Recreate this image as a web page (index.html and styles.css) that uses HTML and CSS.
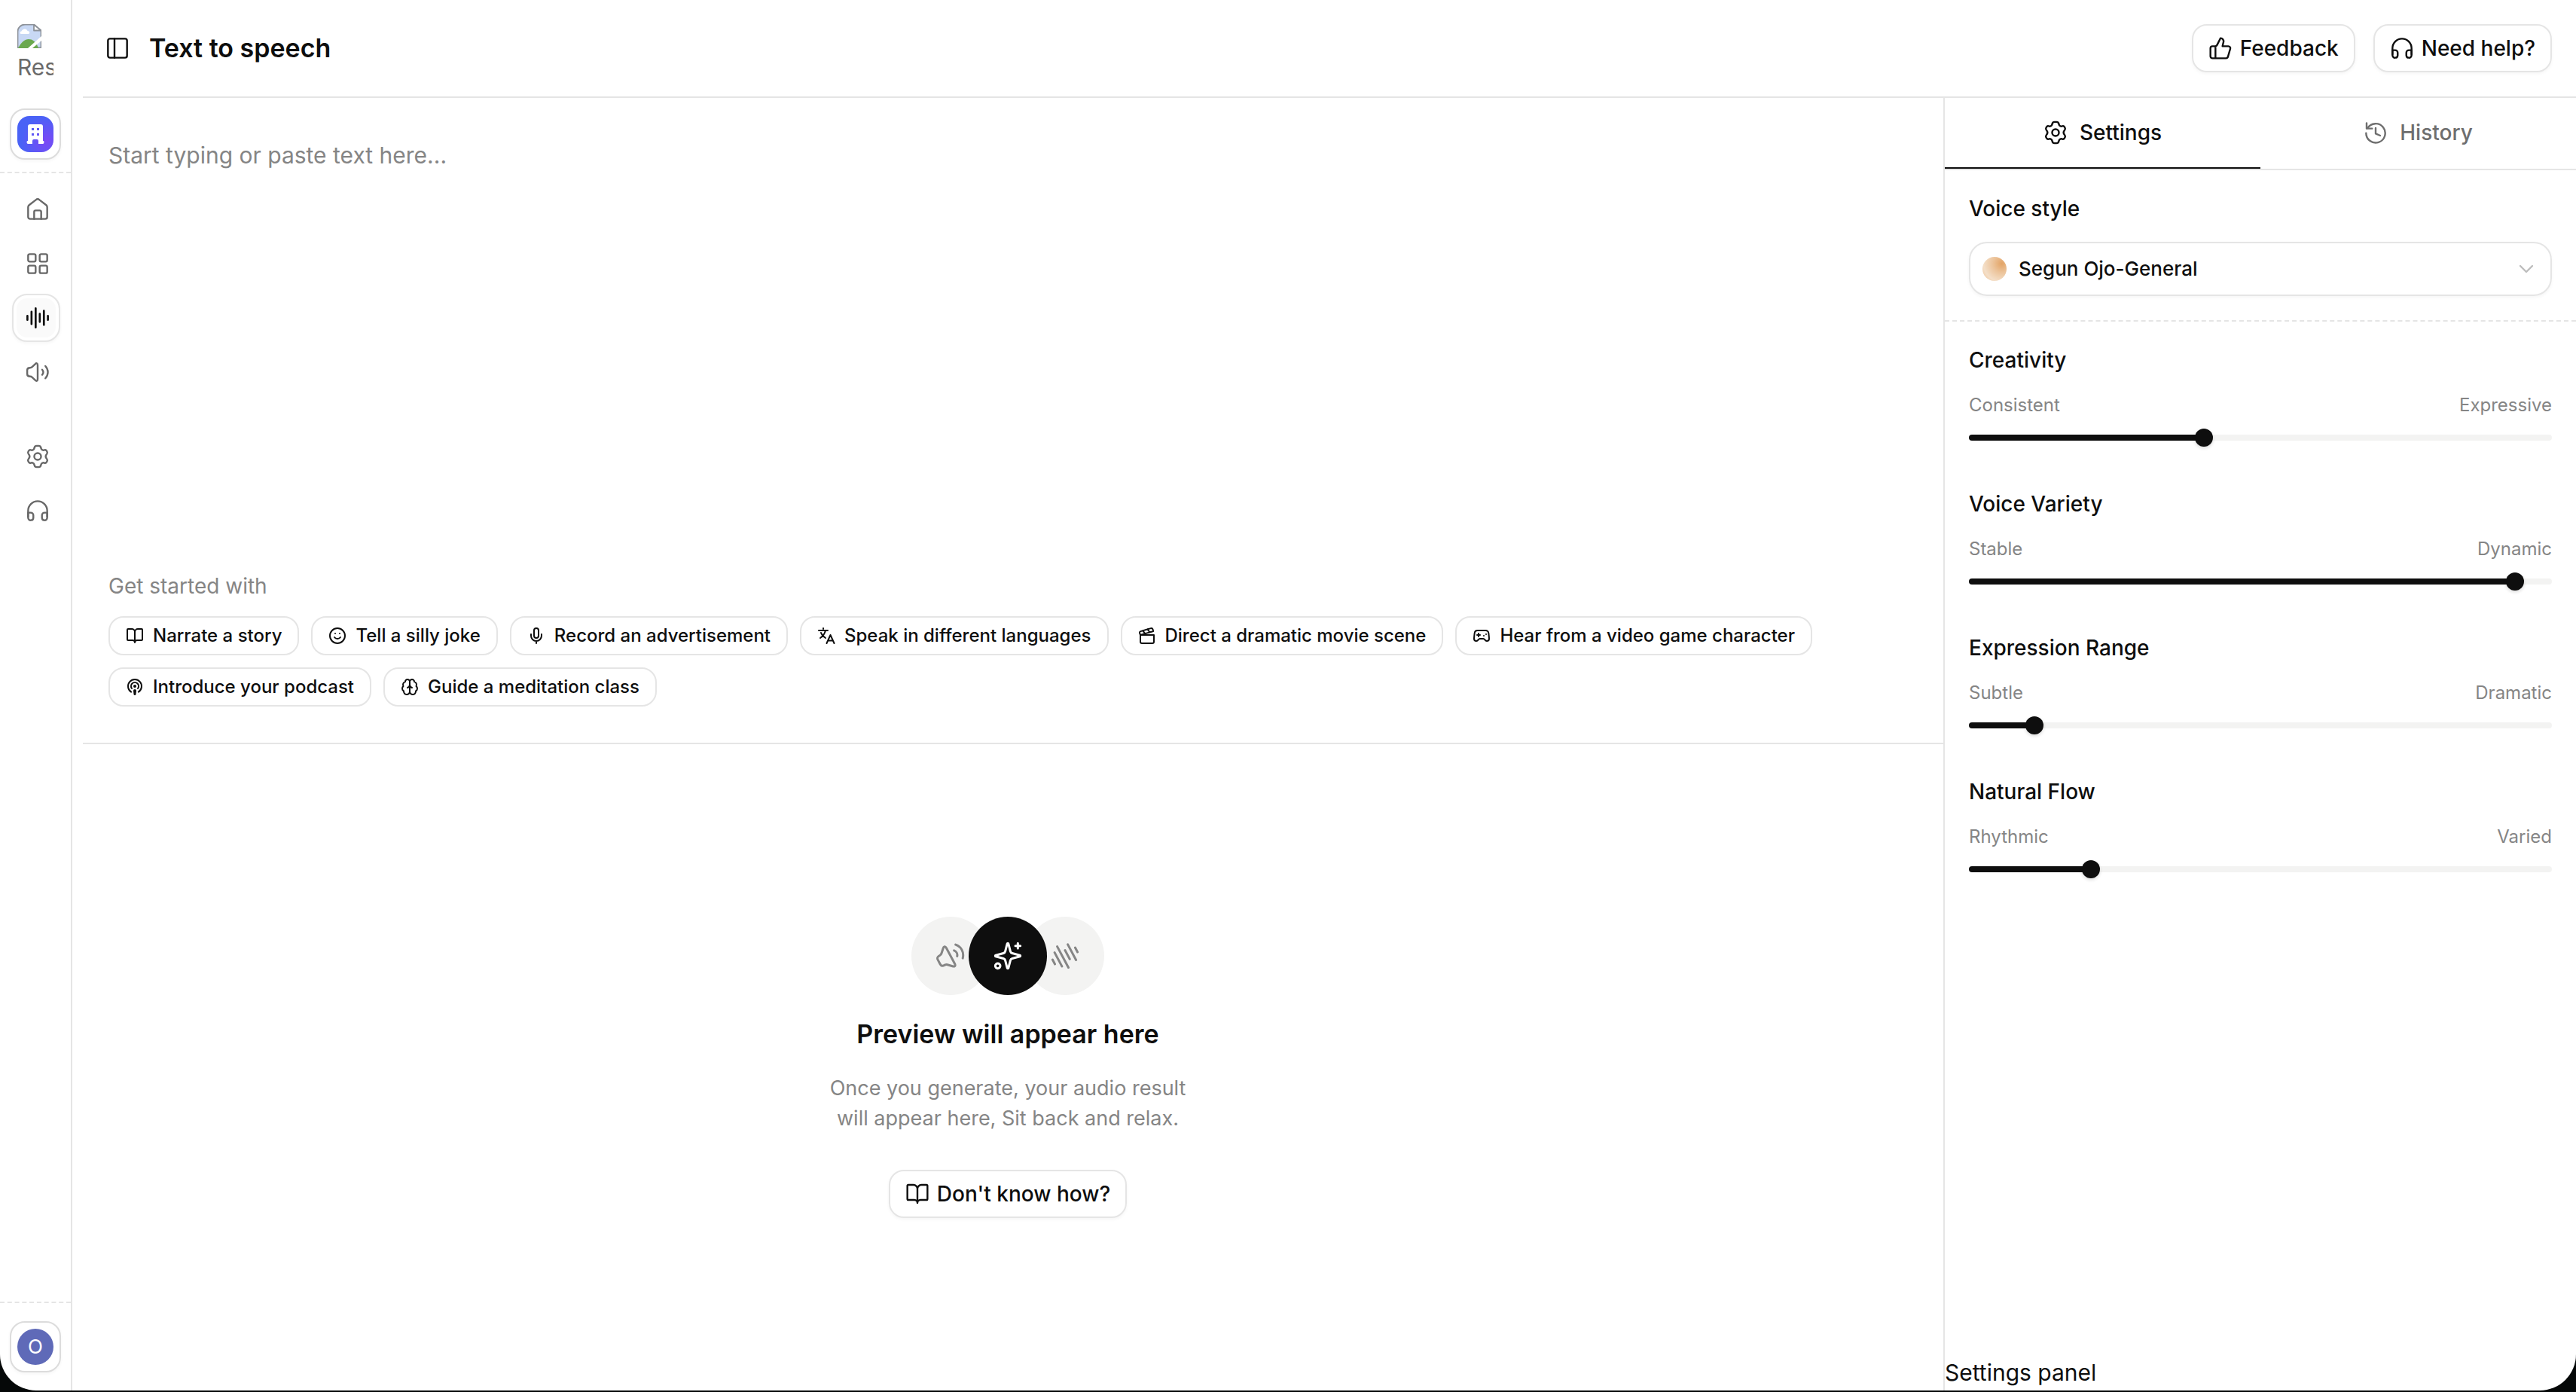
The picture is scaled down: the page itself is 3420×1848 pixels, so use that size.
FILE: index.html
```html
<!DOCTYPE html>
<html lang="en">
<head>
  <meta charset="UTF-8">
  <meta name="viewport" content="width=device-width, initial-scale=1.0">
  <title>Text to speech</title>
  <link rel="stylesheet" href="styles.css">
</head>
<body>
  <!-- shared icons -->
  <svg class="sprite" aria-hidden="true">
    <symbol id="i-home" viewBox="0 0 24 24"><path d="M2.5 9.8c0-.9.3-1.5 1-2.1l6.700-5.200c1.100-.9 2.500-.9 3.600 0l6.700 5.200c.7.6 1 1.200 1 2.100v9.700a2 2 0 0 1-2 2h-15a2 2 0 0 1-2-2z"/><path d="M8.500 21.500v-7a1.500 1.500 0 0 1 1.500-1.500h4a1.500 1.500 0 0 1 1.500 1.500v7"/></symbol>
    <symbol id="i-grid" viewBox="0 0 24 24"><rect x="2.500" y="2.500" width="7.500" height="7.500" rx="1.500"/><rect x="14" y="2.500" width="7.500" height="7.500" rx="1.500"/><rect x="2.500" y="14" width="7.500" height="7.500" rx="1.500"/><rect x="14" y="14" width="7.500" height="7.500" rx="1.500"/></symbol>
    <symbol id="i-wave" viewBox="0 0 24 24"><path d="M1.800 10v4M5.900 5.800v12.400M10 2.500v19M14.100 8v8M18.200 5v14M22.200 10v4"/></symbol>
    <symbol id="i-sound" viewBox="0 0 24 24"><path d="M12 5v14c0 2.200-1.400 2.200-2.500 1l-3-2.900c-.7-.7-1-.8-2-.8-2 0-2.900-.5-2.900-2.400v-3.800c0-1.900.9-2.400 2.900-2.400 1 0 1.300-.1 2-.8l3-2.900c1.100-1.200 2.500-1.200 2.500 1z"/><path d="M16.500 9.500c1.300 1.500 1.300 3.700 0 5.200M19.700 6c3.300 3.600 3.300 8.500 0 12.200"/></symbol>
    <symbol id="i-gear" viewBox="0 0 24 24"><circle cx="12" cy="12" r="3.400"/><path d="M21.300 7.100l-.5-.9c-.5-.8-1.200-.9-2-.6-1.600.6-3.200-.4-3.500-2C15.100 1.900 14.200 1.400 13 1.400h-2c-1.200 0-2.100.5-2.300 2.200-.3 1.600-1.900 2.600-3.500 2-.8-.3-1.500-.2-2 .6l-.5.9c-.6 1-.5 1.700.2 2.500 1.300 1.400 1.300 3.400 0 4.800-.7.800-.8 1.500-.2 2.500l.5.900c.5.800 1.200.9 2 .6 1.600-.6 3.200.4 3.500 2 .2 1.700 1.100 2.200 2.300 2.200h2c1.200 0 2.100-.5 2.300-2.200.3-1.600 1.900-2.600 3.500-2 .8.300 1.500.2 2-.6l.5-.9c.6-1 .5-1.700-.2-2.500-1.300-1.400-1.300-3.400 0-4.800.7-.8.800-1.500.2-2.500z"/></symbol>
    <symbol id="i-headphones" viewBox="0 0 24 24"><path d="M2.500 18v-6a9.500 9.500 0 0 1 19 0v6"/><path d="M2.500 14h2.700a2.500 2.500 0 0 1 2.500 2.500v2.700a2.500 2.500 0 0 1-2.500 2.300 2.500 2.500 0 0 1-2.700-2.500zM21.500 14h-2.700a2.500 2.500 0 0 0-2.500 2.500v2.700a2.500 2.500 0 0 0 2.500 2.300 2.500 2.500 0 0 0 2.700-2.500z"/></symbol>
    <symbol id="i-panel" viewBox="0 0 24 24"><rect x="2.500" y="2.500" width="19" height="19" rx="2"/><path d="M9 2.500v19"/></symbol>
    <symbol id="i-thumb" viewBox="0 0 24 24"><path d="M7 10v12M15 5.880 14 10h5.830a2 2 0 0 1 1.920 2.560l-2.330 8A2 2 0 0 1 17.500 22H4a2 2 0 0 1-2-2v-8a2 2 0 0 1 2-2h2.760a2 2 0 0 0 1.790-1.110L12 2a3.130 3.130 0 0 1 3 3.880Z"/></symbol>
    <symbol id="i-history" viewBox="0 0 24 24"><path d="M3 2.500v5.500h5.500"/><path d="M4 7.500a9.500 9.500 0 1 1-1.500 5"/><path d="M12 7.500V13l4.500 2"/></symbol>
    <symbol id="i-chevron" viewBox="0 0 24 24"><path d="m6 9 6 6 6-6"/></symbol>
    <symbol id="i-book" viewBox="0 0 24 24"><path d="M12 7v14M3 18a1 1 0 0 1-1-1V4a1 1 0 0 1 1-1h5a4 4 0 0 1 4 4 4 4 0 0 1 4-4h5a1 1 0 0 1 1 1v13a1 1 0 0 1-1 1h-6a3 3 0 0 0-3 3 3 3 0 0 0-3-3z"/></symbol>
    <symbol id="i-smile" viewBox="0 0 24 24"><circle cx="12" cy="12" r="10"/><path d="M8 14s1.500 2 4 2 4-2 4-2M9 9h.01M15 9h.01"/></symbol>
    <symbol id="i-mic" viewBox="0 0 24 24"><path d="M12 2a3 3 0 0 0-3 3v7a3 3 0 0 0 6 0V5a3 3 0 0 0-3-3ZM19 10v2a7 7 0 0 1-14 0v-2M12 19v3"/></symbol>
    <symbol id="i-translate" viewBox="0 0 24 24"><path d="M2 5h12M8 2v1M11 5c-1 4-4 8-7 10M5 8c1 3 3 5 6 7M12.500 22l5-11 5 11M14 18.500h7"/></symbol>
    <symbol id="i-clapper" viewBox="0 0 24 24"><path d="M20.200 6 3 11l-.9-2.400c-.3-1.100.3-2.200 1.300-2.500l13.500-4c1.100-.3 2.200.3 2.500 1.300ZM6.200 5.300l3.100 3.900M12.400 3.400l3.100 4M3 11h18v9a2 2 0 0 1-2 2H5a2 2 0 0 1-2-2Z"/></symbol>
    <symbol id="i-game" viewBox="0 0 24 24"><path d="M6 11h4M8 9v4M15 12h.01M18 10h.01M17.320 5H6.680a4 4 0 0 0-3.978 3.590C2.604 9.416 2 14.456 2 16a3 3 0 0 0 3 3c1 0 1.500-.5 2-1l1.414-1.414A2 2 0 0 1 9.828 16h4.344a2 2 0 0 1 1.414.586L17 18c.5.5 1 1 2 1a3 3 0 0 0 3-3c0-1.545-.604-6.584-.685-7.258A4 4 0 0 0 17.320 5z"/></symbol>
    <symbol id="i-podcast" viewBox="0 0 24 24"><path d="M16.850 18.580a9 9 0 1 0-9.700 0M8 14a5 5 0 1 1 8 0"/><circle cx="12" cy="11" r="1"/><path d="M13 17a1 1 0 1 0-2 0l.5 4.500a.5.5 0 1 0 1 0Z"/></symbol>
    <symbol id="i-brain" viewBox="0 0 24 24"><path d="M12 5a3 3 0 1 0-5.997.125 4 4 0 0 0-2.526 5.770 4 4 0 0 0 .556 6.588A4 4 0 1 0 12 18ZM12 5a3 3 0 1 1 5.997.125 4 4 0 0 1 2.526 5.770 4 4 0 0 1-.556 6.588A4 4 0 1 1 12 18ZM15 13a4.500 4.500 0 0 1-3-4 4.500 4.500 0 0 1-3 4"/></symbol>
    <symbol id="i-sparkle" viewBox="0 0 24 24"><path d="M9.937 15.500A2 2 0 0 0 8.500 14.063l-6.135-1.582a.5.5 0 0 1 0-.962L8.500 9.936A2 2 0 0 0 9.937 8.500l1.582-6.135a.5.5 0 0 1 .963 0L14.063 8.500A2 2 0 0 0 15.500 9.937l6.135 1.581a.5.5 0 0 1 0 .964L15.500 14.063a2 2 0 0 0-1.437 1.437l-1.582 6.135a.5.5 0 0 1-.963 0z"/><path d="M20 2v4M22 4h-4"/><circle cx="4" cy="20" r="2"/></symbol>
  </svg>

  <div class="app">
    <aside class="sidebar">
      <div class="logo">
        <svg viewBox="0 0 32 32" aria-hidden="true">
          <path d="M10 .5h12l9.500 8v23H.5V10A9.500 9.500 0 0 1 10 .5z" fill="#c8d8f4" stroke="#8d9299"/>
          <path d="M1 32c4-8 9-12 14-12s10 3 13 12z" fill="#6aa84f"/>
          <path d="M5 13c-2 0-2-3 .5-3.500C7 6 12 5 13.500 9c3.500 0 3.500 4 1 4z" fill="#fff"/>
          <path d="M22 .5v8h9.500z" fill="#fff" stroke="#8d9299"/>
          <path d="M14 32 32 16v6L20 32z" fill="#fff"/>
        </svg>
        <span>Res</span>
      </div>
      <div class="org">
        <button class="tile" aria-label="Organization">
          <span class="org-icon">
            <svg viewBox="0 0 24 28" aria-hidden="true"><path fill="#fff" fill-rule="evenodd" d="M2 4a3 3 0 0 1 3-3h14a3 3 0 0 1 3 3v19c1 0 1.500.7 1.500 1.500S23 27 22 27h-6v-4a2 2 0 0 0-2-2h-4a2 2 0 0 0-2 2v4H2C1 27 .5 25.300.5 24.500S1 23 2 23zM7 6h3v3H7zM14 6h3v3h-3zM7 13h3v3H7zM14 13h3v3h-3z"/></svg>
          </span>
        </button>
      </div>
      <nav class="nav">
        <a href="#" aria-label="Home"><svg><use href="#i-home"/></svg></a>
        <a href="#" aria-label="Projects"><svg><use href="#i-grid"/></svg></a>
        <a href="#" class="active" aria-label="Text to speech"><svg><use href="#i-wave"/></svg></a>
        <a href="#" aria-label="Voices"><svg><use href="#i-sound"/></svg></a>
      </nav>
      <nav class="nav nav-more">
        <a href="#" aria-label="Settings"><svg><use href="#i-gear"/></svg></a>
        <a href="#" aria-label="Support"><svg><use href="#i-headphones"/></svg></a>
      </nav>
      <div class="user">
        <button class="tile"><span class="avatar">O</span></button>
      </div>
    </aside>

    <div class="page">
      <header class="header">
        <button class="toggle" aria-label="Toggle sidebar"><svg><use href="#i-panel"/></svg></button>
        <h1>Text to speech</h1>
        <button class="btn"><svg><use href="#i-thumb"/></svg>Feedback</button>
        <button class="btn"><svg><use href="#i-headphones"/></svg>Need help?</button>
      </header>

      <div class="content">
        <main class="main">
          <section class="editor">
            <textarea aria-label="Text" placeholder="Start typing or paste text here..."></textarea>
            <p class="hint">Get started with</p>
            <div class="chips">
              <button><svg><use href="#i-book"/></svg>Narrate a story</button>
              <button><svg><use href="#i-smile"/></svg>Tell a silly joke</button>
              <button><svg><use href="#i-mic"/></svg>Record an advertisement</button>
              <button><svg><use href="#i-translate"/></svg>Speak in different languages</button>
              <button><svg><use href="#i-clapper"/></svg>Direct a dramatic movie scene</button>
              <button><svg><use href="#i-game"/></svg>Hear from a video game character</button>
              <button><svg><use href="#i-podcast"/></svg>Introduce your podcast</button>
              <button><svg><use href="#i-brain"/></svg>Guide a meditation class</button>
            </div>
          </section>

          <section class="preview">
            <div class="circles">
              <span class="circle tilt"><svg><use href="#i-sound"/></svg></span>
              <span class="circle dark"><svg><use href="#i-sparkle"/></svg></span>
              <span class="circle tilt"><svg><use href="#i-wave"/></svg></span>
            </div>
            <h2>Preview will appear here</h2>
            <p>Once you generate, your audio result<br>will appear here, Sit back and relax.</p>
            <button class="btn"><svg><use href="#i-book"/></svg>Don't know how?</button>
          </section>
        </main>

        <aside class="panel">
          <div class="tabs" role="tablist">
            <button role="tab" aria-selected="true"><svg><use href="#i-gear"/></svg>Settings</button>
            <button role="tab" aria-selected="false"><svg><use href="#i-history"/></svg>History</button>
          </div>
          <div class="voice">
            <label for="voice">Voice style</label>
            <div class="select">
              <span class="orb"></span>
              <select id="voice">
                <option>Segun Ojo-General</option>
              </select>
              <svg><use href="#i-chevron"/></svg>
            </div>
          </div>
          <div class="sliders">
            <div class="slider">
              <label for="creativity">Creativity</label>
              <div class="range-labels"><span>Consistent</span><span>Expressive</span></div>
              <input type="range" id="creativity" value="40" style="--value: 0.4">
            </div>
            <div class="slider">
              <label for="variety">Voice Variety</label>
              <div class="range-labels"><span>Stable</span><span>Dynamic</span></div>
              <input type="range" id="variety" value="95" style="--value: 0.95">
            </div>
            <div class="slider">
              <label for="expression">Expression Range</label>
              <div class="range-labels"><span>Subtle</span><span>Dramatic</span></div>
              <input type="range" id="expression" value="10" style="--value: 0.1">
            </div>
            <div class="slider">
              <label for="flow">Natural Flow</label>
              <div class="range-labels"><span>Rhythmic</span><span>Varied</span></div>
              <input type="range" id="flow" value="20" style="--value: 0.2">
            </div>
          </div>
          <p class="panel-note">Settings panel</p>
        </aside>
      </div>
    </div>
  </div>
</body>
</html>
```

FILE: styles.css
```css
* {
  box-sizing: border-box;
}

body {
  margin: 0;
  background: #050808;
  color: #0e0e0e;
  font-family: Inter, "Liberation Sans", sans-serif;
  font-size: 28px;
  line-height: 40px;
}

button,
select,
textarea {
  font: inherit;
  color: inherit;
  background: none;
  border: none;
  padding: 0;
}

h1,
h2,
p {
  margin: 0;
}

h1,
h2 {
  font-size: 34px;
  line-height: 48px;
  font-weight: 600;
}

svg {
  flex: none;
  fill: none;
  stroke: currentColor;
  stroke-width: 1.8;
  stroke-linecap: round;
  stroke-linejoin: round;
}

.sprite {
  display: none;
}

.app {
  display: flex;
  height: calc(100vh - 2px);
  background: #fff;
  border-radius: 0 0 48px 48px;
  overflow: hidden;
}

/* sidebar */
.sidebar {
  display: flex;
  flex-direction: column;
  width: 96px;
  flex: none;
  border-right: 2px solid #e5e5e5;
}

.logo {
  width: 48px;
  height: 80px;
  margin: 32px 0 32px 23px;
  overflow: hidden;
  color: #6b6b6b;
  font-size: 30px;
}

.logo svg {
  display: block;
  width: 32px;
  height: 32px;
  stroke: none;
}

.logo span {
  display: block;
  line-height: 50px;
}

.org {
  padding: 0 13px 16px;
  border-bottom: 2px dashed #e5e5e5;
}

.tile {
  display: flex;
  align-items: center;
  justify-content: center;
  width: 68px;
  height: 68px;
  border: 2px solid #dcdcdc;
  border-radius: 20px;
  box-shadow: 0 2px 4px rgba(0, 0, 0, 0.04);
}

.org-icon {
  display: flex;
  align-items: center;
  justify-content: center;
  width: 48px;
  height: 48px;
  border-radius: 16px;
  background: radial-gradient(circle at 80% 70%, #7b48f5, #4a62f6 65%);
}

.org-icon svg {
  width: 24px;
  height: 28px;
  stroke: none;
}

.nav {
  display: flex;
  flex-direction: column;
  gap: 8px;
  padding: 16px 14px 0 16px;
}

.nav-more {
  padding-top: 48px;
}

.nav a {
  display: flex;
  align-items: center;
  width: 64px;
  height: 64px;
  padding-left: 16px;
  border: 2px solid transparent;
  border-radius: 20px;
  color: #686868;
}

.nav svg {
  width: 32px;
  height: 32px;
}

.nav .active {
  color: #0e0e0e;
  border-color: #e5e5e5;
  background: #fafafa;
  box-shadow: inset 0 0 0 4px #fff, 0 2px 4px rgba(0, 0, 0, 0.04);
}

.nav .active svg {
  stroke-width: 2;
}

.user {
  margin-top: auto;
  padding: 24px 13px;
  border-top: 2px dashed #e5e5e5;
}

.avatar {
  width: 48px;
  height: 48px;
  border-radius: 50%;
  background: #5f6ab8;
  color: #fff;
  font-size: 26px;
  line-height: 48px;
}

/* header */
.page {
  display: flex;
  flex-direction: column;
  flex: 1;
  min-width: 0;
}

.header {
  display: flex;
  align-items: center;
  gap: 24px;
  height: 130px;
  margin-left: 14px;
  padding: 0 32px 0 28px;
  border-bottom: 2px solid #e5e5e5;
}

.header h1 {
  flex: 1;
}

.toggle {
  display: flex;
}

.toggle svg {
  width: 36px;
  height: 32px;
}

.btn {
  display: flex;
  align-items: center;
  gap: 10px;
  height: 64px;
  padding: 0 20px;
  border: 2px solid #e5e5e5;
  border-radius: 20px;
  box-shadow: 0 2px 4px rgba(0, 0, 0, 0.04);
  font-weight: 500;
}

.btn svg {
  width: 32px;
  height: 32px;
}

/* editor and preview */
.content {
  display: flex;
  flex: 1;
  min-height: 0;
}

.main {
  display: grid;
  grid-template-rows: 1fr 1fr;
  flex: 1;
  min-width: 0;
}

.editor {
  display: flex;
  flex-direction: column;
  margin-left: 14px;
  padding: 52px 34px 48px;
  border-bottom: 2px solid #e5e5e5;
}

.editor textarea {
  flex: 1;
  resize: none;
  outline: none;
  font-size: 30px;
  line-height: 48px;
}

.editor textarea::placeholder {
  color: #858585;
}

.hint {
  margin-bottom: 20px;
  color: #858585;
}

.chips {
  display: flex;
  flex-wrap: wrap;
  gap: 16px;
}

.chips button {
  display: flex;
  align-items: center;
  gap: 12px;
  height: 52px;
  padding: 0 21px;
  border: 2px solid #e5e5e5;
  border-radius: 20px;
  font-size: 24px;
  font-weight: 500;
}

.chips svg {
  width: 24px;
  height: 24px;
  stroke-width: 2;
}

.preview {
  display: flex;
  flex-direction: column;
  align-items: center;
  justify-content: center;
  text-align: center;
}

.circles {
  display: flex;
  margin-bottom: 28px;
}

.circle {
  display: flex;
  align-items: center;
  justify-content: center;
  width: 104px;
  height: 104px;
  border-radius: 50%;
  background: #f3f3f2;
  color: #858585;
}

.circle svg {
  width: 40px;
  height: 40px;
}

.circle.dark {
  z-index: 1;
  margin: 0 -28px;
  background: #0e0e0e;
  color: #fff;
}

.tilt svg {
  transform: rotate(-28deg);
}

.preview p {
  margin: 28px 0 48px;
  color: #858585;
  font-size: 27px;
}

/* settings panel */
.panel {
  display: flex;
  flex-direction: column;
  width: 840px;
  flex: none;
  border-left: 2px solid #e5e5e5;
}

.tabs {
  display: flex;
  height: 96px;
  border-bottom: 2px solid #e5e5e5;
}

.tabs button {
  display: flex;
  align-items: center;
  justify-content: center;
  gap: 16px;
  flex: 1;
  border-bottom: 2px solid transparent;
  color: #6e6e6e;
  font-weight: 500;
}

.tabs button[aria-selected="true"] {
  border-color: #0e0e0e;
  color: #0e0e0e;
}

.tabs svg {
  width: 32px;
  height: 32px;
}

.panel label {
  display: block;
  font-weight: 500;
}

.voice {
  padding: 31px 32px 32px;
  border-bottom: 2px dashed #e5e5e5;
}

.select {
  display: flex;
  align-items: center;
  gap: 16px;
  height: 72px;
  margin-top: 24px;
  padding: 0 16px;
  border: 2px solid #e5e5e5;
  border-radius: 24px;
  box-shadow: 0 2px 4px rgba(0, 0, 0, 0.04);
}

.orb {
  width: 32px;
  height: 32px;
  border-radius: 50%;
  background: radial-gradient(circle at 80% 28%, #e3a466, #ecc49b 35%, #f4dfc8 70%, #eebd8d);
}

.select select {
  flex: 1;
  appearance: none;
  outline: none;
  font-size: 26px;
  font-weight: 500;
}

.select svg {
  width: 32px;
  height: 32px;
  color: #bdbdbd;
}

.sliders {
  display: flex;
  flex-direction: column;
  gap: 56px;
  padding: 31px 32px;
}

.range-labels {
  display: flex;
  justify-content: space-between;
  margin: 22px 0 13px;
  color: #858585;
  font-size: 24px;
  line-height: 36px;
}

.slider input {
  display: block;
  width: 100%;
  height: 24px;
  margin: 0;
  appearance: none;
  background: none;
}

.slider input::-webkit-slider-runnable-track {
  height: 8px;
  border-radius: 4px;
  background: linear-gradient(to right, #0e0e0e calc(12px + (100% - 24px) * var(--value)), #f3f3f2 0);
}

.slider input::-webkit-slider-thumb {
  appearance: none;
  width: 24px;
  height: 24px;
  margin-top: -8px;
  border-radius: 50%;
  background: #0e0e0e;
  box-shadow: 0 2px 4px rgba(0, 0, 0, 0.15);
}

.panel-note {
  margin-top: auto;
  font-size: 30px;
  line-height: 48px;
}
```
